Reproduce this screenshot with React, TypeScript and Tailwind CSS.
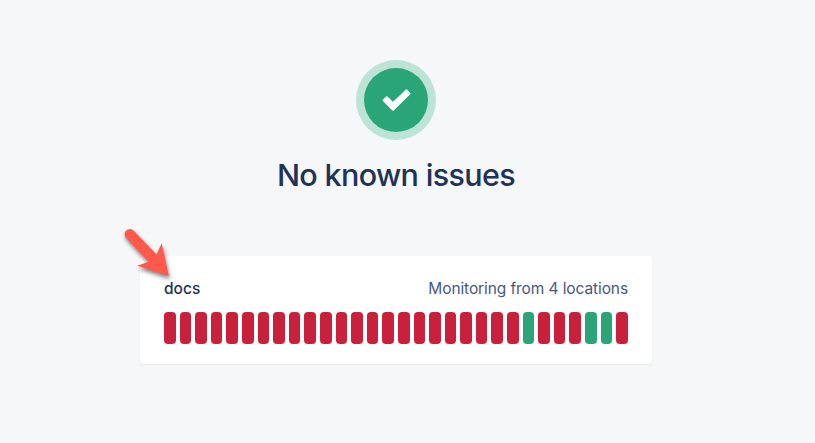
const days: boolean[] = Array.from({ length: 30 }, (_, i) => i === 23 || i === 27 || i === 28);

function StatusBadge() {
  return (
    <div className="flex size-20 items-center justify-center rounded-full bg-[#bce3d5]">
      <div className="flex size-16 items-center justify-center rounded-full bg-[#29a577]">
        <svg className="size-8" viewBox="0 0 32 32" fill="#fff" stroke="#fff" strokeWidth="2" strokeLinejoin="round">
          <path d="M3.6 16.4 6.8 13.2 13 19.2 26.4 6.4 29.5 9.6 13 25.8Z" />
        </svg>
      </div>
    </div>
  );
}

function Arrow() {
  return (
    <svg
      className="absolute left-[115px] top-[220px] h-[70px] w-[65px] drop-shadow-[1px_3px_2px_rgba(0,0,0,0.5)]"
      viewBox="0 0 65 70"
      fill="#fe594b"
    >
      <path d="M10.7 17.2 Q8.7 14.5 10.3 11.6 Q12 9 15.2 9 Q17.1 9.1 18.8 10.8 L41.6 34.6 L46.7 23.2 L53.8 56 L22.3 45.8 L33.5 41.8 Z" />
    </svg>
  );
}

export default function App() {
  return (
    <main className="relative flex h-[443px] w-[815px] flex-col overflow-hidden bg-[#f5f7f9] pl-[140px] pt-[60px] font-['Inter',sans-serif]">
      <div className="flex w-[512px] flex-col items-center">
        <StatusBadge />
        <h1 className="mt-4 text-[30.5px] font-medium leading-[38px] tracking-[-0.65px] text-[#203256]">No known issues</h1>
        <section className="mt-[62px] h-[108px] w-full rounded bg-white px-6 pt-[21px] shadow-[0_1px_2px_rgba(0,0,0,0.06)]">
          <div className="flex h-6 items-center justify-between text-[15.5px] leading-6">
            <h2 className="font-medium text-[#203256]">docs</h2>
            <p className="tracking-[-0.1px] text-[#48587f]">Monitoring from 4 locations</p>
          </div>
          <div className="mt-[11px] flex h-8 gap-1">
            {days.map((up, i) => (
              <div key={i} className={`flex-1 rounded ${up ? "bg-[#29a577]" : "bg-[#c9213b]"}`} />
            ))}
          </div>
        </section>
      </div>
      <Arrow />
    </main>
  );
}
